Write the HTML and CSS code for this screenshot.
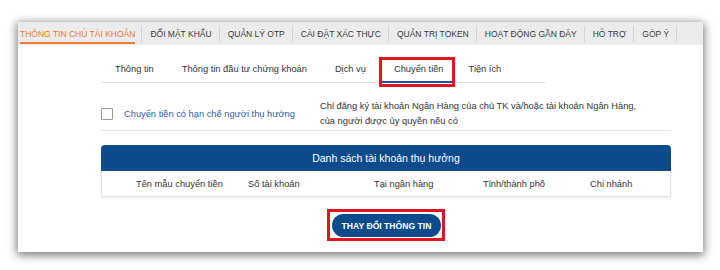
FILE: index.html
```html
<!DOCTYPE html>
<html lang="vi">
<head>
<meta charset="utf-8">
<link rel="stylesheet" href="styles.css">
</head>
<body>
<div class="card">
  <nav class="topnav">
    <div class="nav-item first"><span class="active-text">THÔNG TIN CHỦ TÀI KHOẢN</span></div>
    <div class="nav-item">ĐỔI MẬT KHẨU</div>
    <div class="nav-item">QUẢN LÝ OTP</div>
    <div class="nav-item">CÀI ĐẶT XÁC THỰC</div>
    <div class="nav-item">QUẢN TRỊ TOKEN</div>
    <div class="nav-item">HOẠT ĐỘNG GẦN ĐÂY</div>
    <div class="nav-item">HỖ TRỢ</div>
    <div class="nav-item">GÓP Ý</div>
  </nav>
  <div class="content">
    <div class="tabs">
      <div class="tab">Thông tin</div>
      <div class="tab">Thông tin đầu tư chứng khoán</div>
      <div class="tab">Dịch vụ</div>
      <div class="tab active">Chuyển tiền</div>
      <div class="tab">Tiện ích</div>
    </div>
    <div class="option-row">
      <label class="option">
        <span class="checkbox"></span>
        <span class="option-label">Chuyển tiền có hạn chế người thụ hưởng</span>
      </label>
      <div class="option-desc">Chỉ đăng ký tài khoản Ngân Hàng của chủ TK và/hoặc tài khoản Ngân Hàng,<br>của người được ủy quyền nếu có</div>
    </div>
    <div class="table">
      <div class="table-title">Danh sách tài khoản thụ hưởng</div>
      <div class="table-head">
        <div class="col c1">Tên mẫu chuyển tiền</div>
        <div class="col c2">Số tài khoản</div>
        <div class="col c3">Tại ngân hàng</div>
        <div class="col c4">Tỉnh/thành phố</div>
        <div class="col c5">Chi nhánh</div>
      </div>
    </div>
    <div class="actions">
      <div class="btn-frame"><button class="btn">THAY ĐỔI THÔNG TIN</button></div>
    </div>
  </div>
</div>
</body>
</html>
```
FILE: styles.css
```css
html, body {
  margin: 0;
  padding: 0;
  background: #ffffff;
}
body {
  width: 720px;
  height: 270px;
  overflow: hidden;
  font-family: "Liberation Sans", Arial, sans-serif;
  color: #333333;
}
.card {
  margin: 22px 0 0 18px;
  width: 685px;
  height: 230px;
  background: #ffffff;
  box-shadow: 0 2px 9px 1px rgba(0, 0, 0, 0.55);
}
.topnav {
  display: flex;
  height: 23px;
  background: #ebebeb;
  padding-left: 2px;
}
.nav-item {
  position: relative;
  display: flex;
  align-items: center;
  padding: 0 8px;
  font-size: 8.5px;
  color: #3a3a3a;
  white-space: nowrap;
}
.nav-item.first {
  padding-left: 0;
  padding-right: 7px;
}
.nav-item::after {
  content: "";
  position: absolute;
  right: 0;
  top: 4px;
  bottom: 3px;
  width: 1px;
  background: #d4d4d4;
}
.active-text {
  color: #ee7b30;
  padding: 5px 0 3px;
  border-bottom: 2px solid #ee7b30;
}
.content {
  padding: 11px 32px 0 83px;
}
.tabs {
  display: inline-flex;
  border-bottom: 1px solid #dedede;
  padding-right: 30px;
}
.tab {
  position: relative;
  height: 26px;
  line-height: 26px;
  padding: 0 14px;
  font-size: 9.3px;
  color: #333333;
  white-space: nowrap;
}
.tab.active {
  padding-right: 11px;
}
.tab.active::after {
  content: "";
  position: absolute;
  left: 2px;
  right: 3px;
  bottom: -1px;
  height: 2px;
  background: #1b4fa5;
}
.tab.active::before {
  content: "";
  position: absolute;
  left: -1px;
  right: 0;
  top: 1px;
  bottom: -5px;
  border: 3px solid #e3141c;
}
.option-row {
  display: flex;
  padding: 16px 0 1px;
  border-bottom: 1px solid #e6e6e6;
}
.option {
  display: flex;
  align-items: center;
  width: 219px;
}
.checkbox {
  width: 10px;
  height: 10px;
  border: 1px solid #9a9a9a;
  border-radius: 1px;
  margin-right: 11px;
}
.option-label {
  font-size: 9.3px;
  color: #2d5ea8;
}
.option-desc {
  font-size: 9.3px;
  line-height: 15px;
  color: #333333;
}
.table {
  margin-top: 14px;
  width: 570px;
}
.table-title {
  height: 26px;
  line-height: 26px;
  background: #0d4b8c;
  border-radius: 4px 4px 0 0;
  color: #ffffff;
  font-size: 10.5px;
  text-align: center;
}
.table-head {
  display: flex;
  height: 25px;
  align-items: center;
  padding-left: 34px;
  border: 1px solid #e2e2e2;
  border-top: none;
  box-shadow: 0 1px 2px rgba(0, 0, 0, 0.08);
  font-size: 9.3px;
  color: #333333;
}
.col {
  white-space: nowrap;
}
.c1 { width: 112px; }
.c2 { width: 126px; }
.c3 { width: 109px; }
.c4 { width: 107px; }
.c5 { width: 80px; }
.actions {
  display: flex;
  justify-content: center;
  width: 570px;
  margin-top: 12px;
}
.btn-frame {
  border: 3px solid #e3141c;
  padding: 2px 1px 1px 2px;
}
.btn {
  display: block;
  width: 109px;
  height: 23px;
  border: none;
  border-radius: 12px;
  background: #0d4b8c;
  color: #ffffff;
  font-family: "Liberation Sans", Arial, sans-serif;
  font-size: 8.6px;
  font-weight: bold;
  padding: 0;
}
```
